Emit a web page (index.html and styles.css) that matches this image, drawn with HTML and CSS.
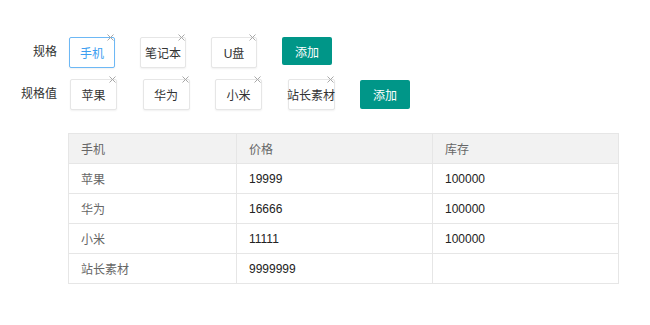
FILE: index.html
```html
<!DOCTYPE html>
<html lang="zh-CN">
<head>
  <meta charset="UTF-8" />
  <title>规格</title>
  <link rel="stylesheet" href="styles.css">
</head>
<body>

  <div class="spec-box">
    <div class="spec-row">
      <label class="spec-label">规格</label>
      <div class="spec-tags">
        <span class="tag active">手机<i class="tag-close"><svg viewBox="0 0 7 7"><path d="M0.5 0.5L6.5 6.5M6.5 0.5L0.5 6.5"/></svg></i></span>
        <span class="tag">笔记本<i class="tag-close"><svg viewBox="0 0 7 7"><path d="M0.5 0.5L6.5 6.5M6.5 0.5L0.5 6.5"/></svg></i></span>
        <span class="tag">U盘<i class="tag-close"><svg viewBox="0 0 7 7"><path d="M0.5 0.5L6.5 6.5M6.5 0.5L0.5 6.5"/></svg></i></span>
        <button class="btn-add top">添加</button>
      </div>
    </div>
    <div class="spec-row">
      <label class="spec-label">规格值</label>
      <div class="spec-tags wide">
        <span class="tag">苹果<i class="tag-close"><svg viewBox="0 0 7 7"><path d="M0.5 0.5L6.5 6.5M6.5 0.5L0.5 6.5"/></svg></i></span>
        <span class="tag">华为<i class="tag-close"><svg viewBox="0 0 7 7"><path d="M0.5 0.5L6.5 6.5M6.5 0.5L0.5 6.5"/></svg></i></span>
        <span class="tag">小米<i class="tag-close"><svg viewBox="0 0 7 7"><path d="M0.5 0.5L6.5 6.5M6.5 0.5L0.5 6.5"/></svg></i></span>
        <span class="tag">站长素材<i class="tag-close"><svg viewBox="0 0 7 7"><path d="M0.5 0.5L6.5 6.5M6.5 0.5L0.5 6.5"/></svg></i></span>
        <button class="btn-add">添加</button>
      </div>
    </div>

    <table class="spec-table">
      <colgroup>
        <col style="width:168px">
        <col style="width:196px">
        <col>
      </colgroup>
      <thead>
        <tr><th>手机</th><th>价格</th><th>库存</th></tr>
      </thead>
      <tbody>
        <tr><td>苹果</td><td class="num">19999</td><td class="num">100000</td></tr>
        <tr><td>华为</td><td class="num">16666</td><td class="num">100000</td></tr>
        <tr><td>小米</td><td class="num">11111</td><td class="num">100000</td></tr>
        <tr><td>站长素材</td><td class="num">9999999</td><td class="num"></td></tr>
      </tbody>
    </table>
  </div>

</body>
</html>
```

FILE: styles.css
```css
/* Reset & basics */
* {
  box-sizing: border-box;
}
body {
  margin: 0;
  font-family: "Liberation Sans", "Noto Sans CJK SC", sans-serif;
  font-size: 12px;
  color: #333;
  background: #fff;
}
.spec-box {
  padding: 37px 0 0 0;
}
.spec-row {
  display: flex;
  align-items: flex-start;
  margin-bottom: 11px;
}
.spec-label {
  width: 57px;
  height: 31px;
  line-height: 31px;
  text-align: right;
  margin-right: 12px;
  color: #333;
}
.spec-tags {
  display: flex;
  align-items: center;
  gap: 25px;
}
.spec-tags.wide {
  gap: 25.5px;
  margin-left: 1px;
}
.spec-tags.wide .tag {
  width: 47px;
}
.tag {
  position: relative;
  display: flex;
  align-items: center;
  justify-content: center;
  width: 46px;
  height: 31px;
  border: 1px solid #e6e6e6;
  border-radius: 2px;
  box-shadow: 0 1px 2px rgba(0,0,0,0.06);
  background: #fff;
  white-space: nowrap;
  color: #333;
}
.tag.active {
  border-color: #6db8f5;
  color: #3d9ef0;
}
.tag-close {
  position: absolute;
  top: -4px;
  right: 0;
  width: 7px;
  height: 7px;
  line-height: 0;
}
.tag-close svg {
  width: 7px;
  height: 7px;
  stroke: #a8a8a8;
  stroke-width: 1;
  fill: none;
}
.btn-add {
  width: 50px;
  height: 29px;
  border: none;
  border-radius: 2px;
  background-color: #009688;
  color: #fff;
  font-family: inherit;
  font-size: 12px;
  cursor: pointer;
}
.btn-add.top {
  align-self: flex-start;
  height: 28px;
}
.btn-add:hover {
  opacity: 0.85;
}
.spec-table {
  margin: 23px 0 0 68px;
  width: 551px;
  border-collapse: collapse;
  table-layout: fixed;
}
.spec-table th,
.spec-table td {
  height: 30px;
  padding: 0 12px;
  border: 1px solid #e6e6e6;
  text-align: left;
  font-weight: normal;
  color: #666;
}
.spec-table th {
  background: #f2f2f2;
}
.spec-table td.num {
  color: #222;
}
```
